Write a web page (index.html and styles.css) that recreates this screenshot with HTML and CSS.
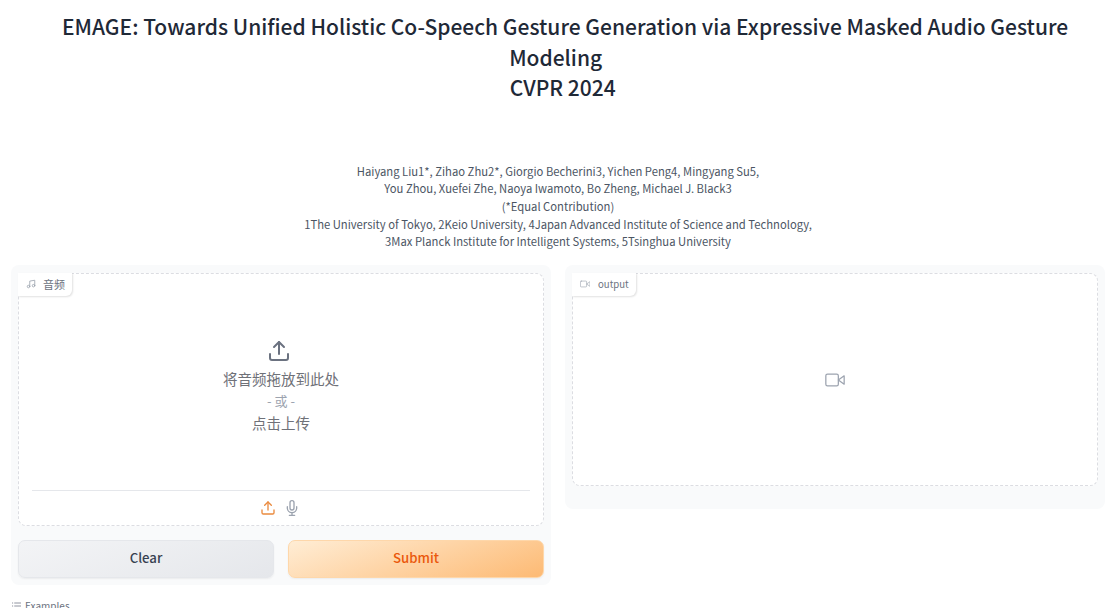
FILE: index.html
```html
<!DOCTYPE html>
<html lang="zh">
<head>
<meta charset="utf-8">
<title>EMAGE</title>
<link rel="stylesheet" href="styles.css">
</head>
<body>
<main class="page">
  <h1 class="title">&nbsp;&nbsp;&nbsp;EMAGE: Towards Unified Holistic Co-Speech Gesture Generation via Expressive Masked Audio Gesture Modeling&nbsp;<br>&nbsp;&nbsp;CVPR 2024</h1>
  <p class="authors">Haiyang Liu1*, Zihao Zhu2*, Giorgio Becherini3, Yichen Peng4, Mingyang Su5,<br>You Zhou, Xuefei Zhe, Naoya Iwamoto, Bo Zheng, Michael J. Black3<br>(*Equal Contribution)<br>1The University of Tokyo, 2Keio University, 4Japan Advanced Institute of Science and Technology,<br>3Max Planck Institute for Intelligent Systems, 5Tsinghua University</p>
  <div class="row">
    <section class="panel panel-left">
      <div class="drop drop-audio">
        <div class="label">
          <svg class="label-icon" viewBox="0 0 24 24" fill="none" stroke="currentColor" stroke-width="2" stroke-linecap="round" stroke-linejoin="round"><path d="M9 18V5l12-2v13"/><circle cx="6" cy="18" r="3"/><circle cx="18" cy="16" r="3"/></svg>
          <span>音频</span>
        </div>
        <div class="upload">
          <svg class="upload-icon" viewBox="0 0 24 24" fill="none" stroke="currentColor" stroke-width="2" stroke-linecap="round" stroke-linejoin="round"><path d="M21 15v4a2 2 0 0 1-2 2H5a2 2 0 0 1-2-2v-4"/><polyline points="17 8 12 3 7 8"/><line x1="12" y1="3" x2="12" y2="15"/></svg>
          <div class="upload-line">将音频拖放到此处</div>
          <div class="upload-line upload-or">- 或 -</div>
          <div class="upload-line">点击上传</div>
        </div>
        <div class="sources">
          <svg class="src src-on" viewBox="0 0 24 24" fill="none" stroke="currentColor" stroke-width="2" stroke-linecap="round" stroke-linejoin="round"><path d="M21 15v4a2 2 0 0 1-2 2H5a2 2 0 0 1-2-2v-4"/><polyline points="17 8 12 3 7 8"/><line x1="12" y1="3" x2="12" y2="15"/></svg>
          <svg class="src src-off" viewBox="0 0 24 24" fill="none" stroke="currentColor" stroke-width="2" stroke-linecap="round" stroke-linejoin="round"><path d="M12 1a3 3 0 0 0-3 3v8a3 3 0 0 0 6 0V4a3 3 0 0 0-3-3z"/><path d="M19 10v2a7 7 0 0 1-14 0v-2"/><line x1="12" y1="19" x2="12" y2="23"/><line x1="8" y1="23" x2="16" y2="23"/></svg>
        </div>
      </div>
      <div class="buttons">
        <button class="btn btn-clear" type="button">Clear</button>
        <button class="btn btn-submit" type="button">Submit</button>
      </div>
    </section>
    <section class="panel panel-right">
      <div class="drop drop-video">
        <div class="label">
          <svg class="label-icon" viewBox="0 0 24 24" fill="none" stroke="currentColor" stroke-width="1.5" stroke-linecap="round" stroke-linejoin="round"><rect x="1" y="5" width="15" height="14" rx="2"/><polygon points="23 7 16 12 23 17"/></svg>
          <span class="label-latin">output</span>
        </div>
        <div class="video-empty">
          <svg class="video-icon" viewBox="0 0 24 24" fill="none" stroke="currentColor" stroke-width="1.5" stroke-linecap="round" stroke-linejoin="round"><rect x="1" y="5" width="15" height="14" rx="2"/><polygon points="23 7 16 12 23 17"/></svg>
        </div>
      </div>
    </section>
  </div>
  <div class="examples">
    <svg class="examples-icon" viewBox="0 0 12 10" fill="none" stroke="currentColor" stroke-width="1"><path d="M0 1h1.500M3 1h9M0 5h1.500M3 5h9M0 9h1.500M3 9h9"/></svg>
    <span>Examples</span>
  </div>
</main>
</body>
</html>
```
FILE: styles.css
```css
* { box-sizing: border-box; }
html, body { margin: 0; height: 608px; overflow: hidden; background: #fff; }
body { font-family: "Noto Sans CJK SC", "Noto Sans", sans-serif; color: #27272a; }
.page { padding: 11px 11px 0; }
.title {
  margin: 0;
  font-size: 21px;
  line-height: 30.5px;
  font-weight: 500;
  text-align: center;
  color: #1f2937;
}
.authors {
  margin: 60px 0 0;
  font-size: 11.25px;
  line-height: 17.7px;
  text-align: center;
  color: #4b5563;
}
.row { display: flex; gap: 14px; align-items: flex-start; margin-top: 14px; }
.panel {
  flex: 1 1 0;
  background: #f9fafb;
  border-radius: 8px;
  padding: 8px 7px 7px;
}
.panel-right { padding-bottom: 23px; }
.drop {
  position: relative;
  background: #fff;
  border: 1px dashed #dcdde2;
  border-radius: 8px;
  display: flex;
  flex-direction: column;
}
.drop-audio { height: 253px; }
.drop-video { height: 213px; }
.label {
  position: absolute;
  top: -1px;
  left: -1px;
  height: 23px;
  display: flex;
  align-items: center;
  gap: 7px;
  padding: 0 7px 2px 8px;
  background: #fff;
  border-radius: 0 0 6px 0;
  box-shadow: 1px 1px 2px rgba(0, 0, 0, 0.12);
  font-size: 11px;
  color: #6b7280;
}
.label-icon { width: 10px; height: 10px; color: #9ca3af; }
.label-latin { font-size: 9.6px; margin-left: 1px; }
.upload {
  flex: 1;
  display: flex;
  flex-direction: column;
  align-items: center;
  padding-top: 65px;
}
.upload-icon { width: 24px; height: 24px; color: #6b7280; margin: 0 4px 5px 0; }
.upload-line { font-size: 14.5px; line-height: 22px; color: #6f7178; }
.upload-or { color: #9ca3af; font-size: 13px; }
.sources {
  margin: 0 13px;
  height: 35px;
  padding-right: 2px;
  border-top: 1px solid #e5e7eb;
  display: flex;
  justify-content: center;
  align-items: center;
  gap: 8px;
}
.src { width: 16px; height: 16px; }
.src-on { color: #ea8a3e; }
.src-off { color: #9ca3af; }
.video-empty { flex: 1; display: flex; justify-content: center; align-items: center; }
.video-icon { width: 20px; height: 20px; color: #9ca3af; }
.buttons { display: flex; gap: 14px; margin-top: 14px; }
.btn {
  flex: 1 1 0;
  height: 38px;
  padding: 0 0 3px;
  border-radius: 7px;
  font: 500 13.2px "Noto Sans CJK SC", "Noto Sans", sans-serif;
  box-shadow: 0 1px 2px rgba(0, 0, 0, 0.06);
}
.btn-clear {
  border: 1px solid #e5e7eb;
  background: linear-gradient(160deg, #f3f4f6, #e5e7eb);
  color: #374151;
}
.btn-submit {
  border: 1px solid #fed7aa;
  background: linear-gradient(160deg, #ffedd5, #fdba74);
  color: #ea580c;
}
.examples {
  display: flex;
  align-items: center;
  gap: 4px;
  margin-top: 14px;
  padding-left: 1px;
  font-size: 10px;
  line-height: 14px;
  color: #6b7280;
}
.examples-icon { width: 9px; height: 8px; }
```
